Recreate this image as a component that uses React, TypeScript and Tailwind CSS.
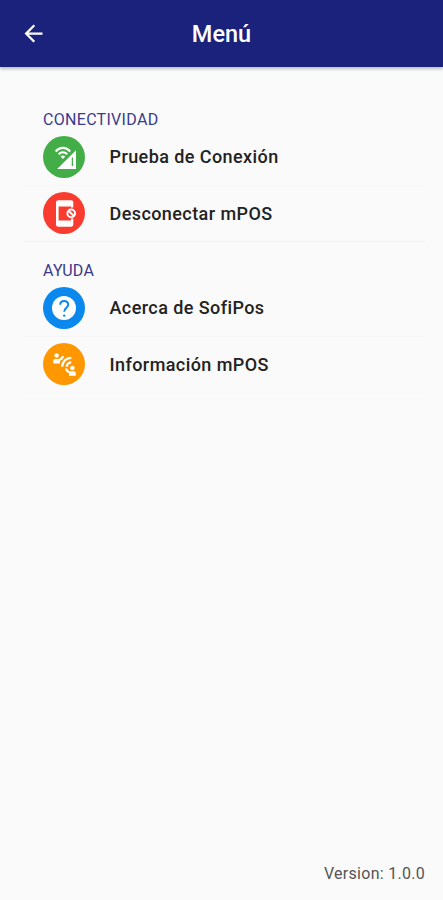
import type { ReactNode } from 'react'
import { MdArrowBack, MdConnectWithoutContact } from 'react-icons/md'

export default function App() {
  return (
    <div className="flex h-[900px] w-[443px] flex-col bg-[#fafafa] font-['Roboto',sans-serif]">
      <Header />
      <main className="flex-1 pl-6 pr-[18px] pt-11">
        <Section title="CONECTIVIDAD">
          <MenuItem
            label="Prueba de Conexión"
            color="bg-[#43ae48]"
            border="border-[#f7f7f7]"
            icon={<NetworkIcon />}
          />
          <MenuItem
            label="Desconectar mPOS"
            color="bg-[#f93b30]"
            border="border-[#f1f1f1]"
            icon={<PhoneBlockedIcon />}
          />
        </Section>
        <div className="h-5" />
        <Section title="AYUDA">
          <MenuItem
            label="Acerca de SofiPos"
            color="bg-[#0a88ee]"
            border="border-[#f5f5f5]"
            icon={<HelpIcon />}
          />
          <MenuItem
            label="Información mPOS"
            color="bg-[#ff9800]"
            border="border-[#f7f7f7]"
            icon={<MdConnectWithoutContact size={27} />}
          />
        </Section>
      </main>
      <footer className="pb-4 pr-[18px] text-right text-[16px] leading-5 tracking-[0.28px] text-[#555]">
        Version: 1.0.0
      </footer>
    </div>
  )
}

function Header() {
  return (
    <header className="flex h-[67px] items-center bg-[#1b227c] px-5 text-white shadow-[0_2px_3px_rgba(0,0,0,0.25)]">
      <MdArrowBack size={27} />
      <h1 className="flex-1 pr-[27px] pt-[3px] text-center text-[23.5px] font-medium">Menú</h1>
    </header>
  )
}

function Section({ title, children }: { title: string; children: ReactNode }) {
  return (
    <section>
      <h2 className="pl-[19px] text-[16px] leading-[18px] tracking-[0.3px] text-[#3a3a8c]">{title}</h2>
      {children}
    </section>
  )
}

interface MenuItemProps {
  label: string
  color: string
  border: string
  icon: ReactNode
}

function MenuItem({ label, color, border, icon }: MenuItemProps) {
  return (
    <div className={`flex h-[56.5px] items-center border-b pl-[19px] ${border}`}>
      <div className={`flex h-[42px] w-[42px] items-center justify-center rounded-full text-white ${color}`}>
        {icon}
      </div>
      <span className="ml-[24.5px] text-[18px] font-medium tracking-[0.42px] text-[#222]">{label}</span>
    </div>
  )
}

// Wifi arcs over a signal triangle
function NetworkIcon() {
  return (
    <svg width="42" height="42" viewBox="0 0 42 42" fill="none">
      <path d="M33 14.3V33H14.2z" fill="#fff" />
      <path d="M29.4 21.5v8.5" stroke="#43ae48" strokeWidth="1.3" />
      <path d="M12.6 15.4c4.2-4.7 10.4-4.7 14.6 0" stroke="#fff" strokeWidth="2.2" />
      <path d="M15.6 18.3c2.6-2.7 6-2.7 8.6 0" stroke="#fff" strokeWidth="2" />
      <path d="M17.6 20.4q2.3-1.7 4.6 0l-2.3 2.5z" fill="#fff" />
    </svg>
  )
}

function PhoneBlockedIcon() {
  return (
    <svg width="42" height="42" viewBox="0 0 42 42" fill="none">
      <path
        d="M15.2 8.3h12.9c1.3 0 2.2.9 2.2 2.2v5.1H28v-1.2H15.6v14H28v-2h2.3v6.2c0 1.3-.9 2.2-2.2 2.2H15.2c-1.3 0-2.2-.9-2.2-2.2V10.5c0-1.3.9-2.2 2.2-2.2z"
        fill="#fff"
      />
      <circle cx="28.2" cy="21.4" r="3.8" stroke="#fff" strokeWidth="2" />
      <path d="m25.8 19 4.8 4.8" stroke="#fff" strokeWidth="2" />
    </svg>
  )
}

function HelpIcon() {
  return (
    <svg width="42" height="42" viewBox="0 0 42 42" fill="none">
      <circle cx="21" cy="21" r="12" fill="#fff" />
      <path
        d="M17.2 17.8c0-5 8-5 8-.2 0 3.2-4 3.2-4 7.2"
        stroke="#0a88ee"
        strokeWidth="2"
      />
      <circle cx="21.2" cy="28.6" r="1.2" fill="#0a88ee" />
    </svg>
  )
}
